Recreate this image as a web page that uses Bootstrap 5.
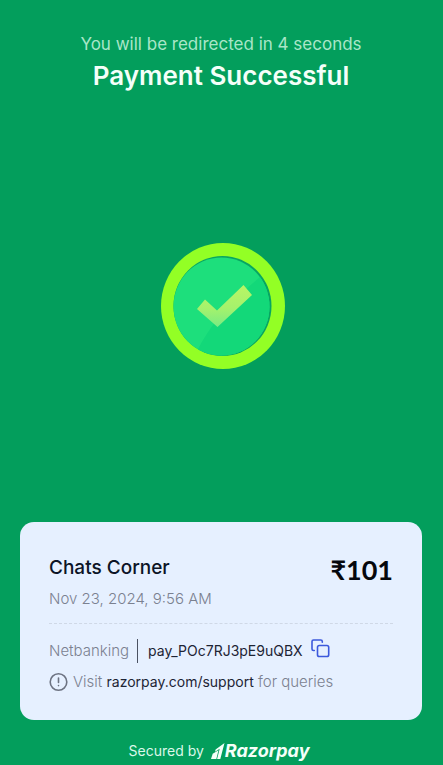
<!DOCTYPE html>
<html lang="en">
<head>
<meta charset="utf-8">
<meta name="viewport" content="width=device-width, initial-scale=1">
<title>Payment Successful</title>
<link href="https://cdn.jsdelivr.net/npm/bootstrap@5.3.0/dist/css/bootstrap.min.css" rel="stylesheet">
<style>
body { background: #039e5c; font-family: Inter, "Liberation Sans", sans-serif; font-size: 15px; line-height: 20px; font-weight: 300; color: #7b8190; }
.page { padding: 34px 21px 4px 20px; }
.redirect { font-size: 17px; font-weight: 400; color: #a9e6c8; }
.headline { font-size: 26px; line-height: 36px; font-weight: 600; color: #f4fff9; margin-top: 4px; }
.badge-area { padding-bottom: 4px; }
.badge-art { width: 124px; height: 126px; margin-left: 3px; }
.receipt { background: #e6f0ff; border-radius: 14px; padding: 30px 29px 28px; }
.merchant { font-size: 19px; line-height: 32px; font-weight: 500; color: #0c1426; }
.amount { font-family: Lato, "Noto Sans", sans-serif; font-size: 27px; line-height: 36px; font-weight: 700; color: #05070c; }
.paid-on { margin-top: 5px; }
.divider { border-top: 1px dashed #cfd8e6; margin: 14px 0 15px; }
.payment-id { border-left: 1px solid #4b5262; margin-left: 8px; padding-left: 10px; font-size: 14px; line-height: 24px; font-weight: 400; color: #1d2435; }
.support-link { font-size: 14px; font-weight: 400; color: #1d2435; }
.copy-btn { margin-left: 8px; line-height: 0; }
.help { margin-top: 9px; }
.help svg { margin-right: 4px; }
.secured { color: #dcf8ea; font-size: 14px; font-weight: 400; padding: 21px 4px 0 0; }
.brand { font-size: 18px; font-weight: 700; font-style: italic; color: #f4fff9; margin-left: 7px; }
</style>
<script defer src="https://cdn.jsdelivr.net/npm/bootstrap@5.3.0/dist/js/bootstrap.bundle.min.js"></script>
</head>
<body>
<main class="page d-flex flex-column min-vh-100">
  <header class="text-center">
    <p class="redirect mb-0">You will be redirected in 4 seconds</p>
    <h1 class="headline mb-0">Payment Successful</h1>
  </header>

  <div class="badge-area flex-grow-1 d-flex align-items-center justify-content-center">
    <svg class="badge-art" viewBox="0 0 124 126" role="img" aria-label="Success">
      <defs>
        <linearGradient id="tick" x1="0" y1="0" x2="0" y2="1"><stop offset="0" stop-color="#b9f565"/><stop offset=".55" stop-color="#a5f26c"/><stop offset="1" stop-color="#79eb83"/></linearGradient>
        <clipPath id="disc"><ellipse cx="60.5" cy="63.5" rx="48" ry="49"/></clipPath>
      </defs>
      <ellipse cx="62" cy="63" rx="62" ry="63" fill="#93ff25"/>
      <ellipse cx="61.5" cy="63" rx="49" ry="50" fill="#08a562"/>
      <g clip-path="url(#disc)">
        <rect width="124" height="126" fill="#1ddf7c"/>
        <path d="M124 12 92 40Q54 72 36 108L30 126H124Z" fill="#13d879"/>
      </g>
      <path d="M36 66 44 56.500 56 67.500 82.500 42 91 52 56.500 84Z" fill="url(#tick)"/>
    </svg>
  </div>

  <section class="receipt">
    <div class="d-flex justify-content-between">
      <div>
        <h2 class="merchant mb-0">Chats Corner</h2>
        <p class="paid-on mb-0">Nov 23, 2024, 9:56 AM</p>
      </div>
      <div class="amount">₹101</div>
    </div>
    <div class="divider"></div>
    <div class="d-flex align-items-center">
      <span>Netbanking</span>
      <span class="payment-id">pay_POc7RJ3pE9uQBX</span>
      <button type="button" class="copy-btn btn p-0 border-0 align-self-start" aria-label="Copy payment ID">
        <svg width="20" height="20" viewBox="0 0 20 20" fill="none" stroke="#3c59dc" stroke-width="1.600" stroke-linecap="round" stroke-linejoin="round"><rect x="6.500" y="6.500" width="11.200" height="11" rx="1.800"/><path d="M3.300 11.500H2.500Q1 11.500 1 10V2.500Q1 1 2.500 1H9.800Q11.300 1 11.300 2.500V3.300"/></svg>
      </button>
    </div>
    <div class="help d-flex align-items-center">
      <svg width="20" height="20" viewBox="0 0 20 20" fill="none" stroke="#6d7382" stroke-width="1.600" stroke-linecap="round" aria-hidden="true"><circle cx="9.500" cy="10" r="8.300"/><path d="M9.500 6v4.500M9.500 13.500v.1"/></svg>
      <span>Visit <a class="support-link text-decoration-none" href="https://razorpay.com/support">razorpay.com/support</a> for queries</span>
    </div>
  </section>

  <footer class="secured d-flex justify-content-center align-items-center">
    <span>Secured by</span>
    <span class="brand d-flex align-items-center">
      <svg width="14" height="16" viewBox="0 0 14 16" fill="#f4fff9" aria-hidden="true"><path d="M13.500 0 9.300 16H6.100L8.700 5.800 4 8.700 4.600 6.400Z"/><path d="M1.700 10.700 7.500 7.200 5.300 16H0Z"/></svg>
      <span>Razorpay</span>
    </span>
  </footer>
</main>
</body>
</html>
